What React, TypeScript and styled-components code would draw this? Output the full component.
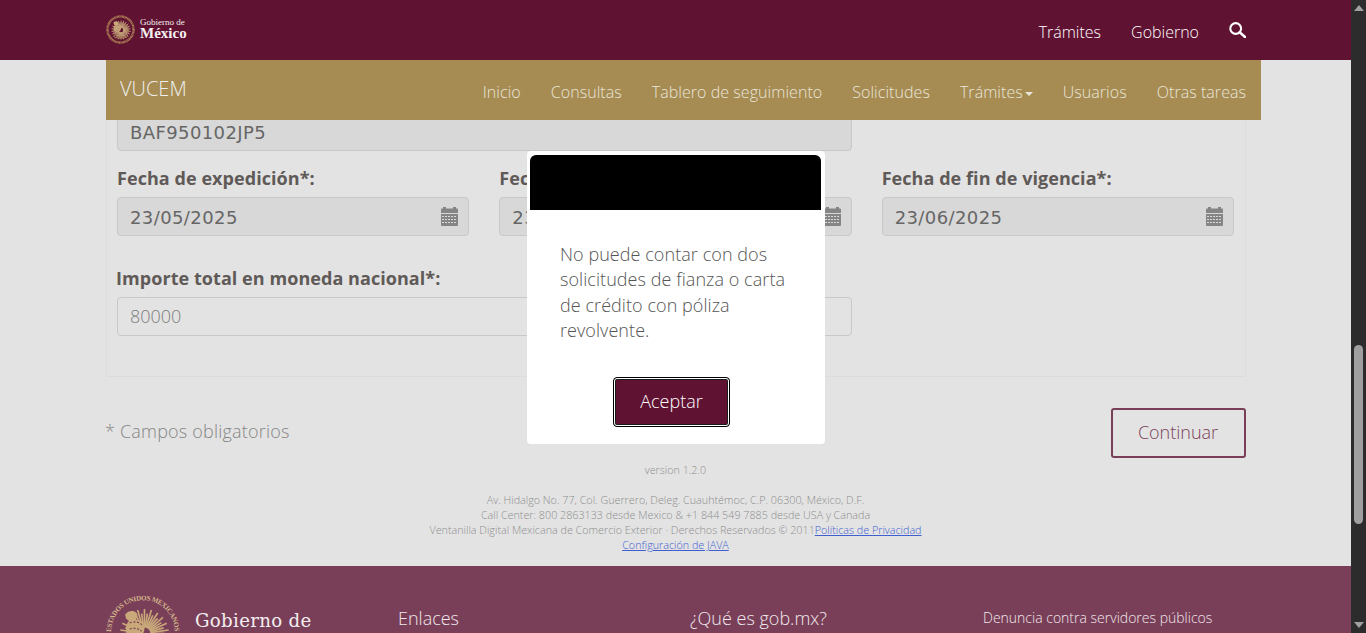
import styled, { createGlobalStyle } from 'styled-components';

const GlobalStyle = createGlobalStyle`
  html, body {
    margin: 0;
    height: 100%;
    overflow: hidden;
    background: #e3e3e3;
    font-family: "Open Sans", "Noto Sans", sans-serif;
  }
  * {
    box-sizing: border-box;
  }
`;

const MAROON = '#5f1232';
const FOOTER = '#7a3f58';

const Screen = styled.div`
  display: flex;
  width: 1366px;
  height: 633px;
  overflow: hidden;
`;

const Page = styled.div`
  position: relative;
  display: flex;
  flex-direction: column;
  width: 1351px;
  height: 633px;
  overflow: hidden;
`;

/* top bar */
const TopBar = styled.header`
  display: flex;
  flex-shrink: 0;
  align-items: center;
  justify-content: space-between;
  height: 60px;
  padding: 0 105px 0 106px;
  background: ${MAROON};
`;

const Brand = styled.div`
  display: flex;
  align-items: center;
  gap: 5px;
  margin-top: -1px;
`;

const BrandText = styled.div`
  display: flex;
  flex-direction: column;
  margin-top: -2px;
  color: #f4f0f0;
  font-family: "Liberation Serif", serif;
`;

const BrandSmall = styled.span`
  font-size: 9px;
  line-height: 9px;
`;

const BrandBig = styled.span`
  font-size: 15px;
  line-height: 13px;
  font-weight: 700;
`;

const TopLinks = styled.nav`
  display: flex;
  align-items: center;
  gap: 30px;
  margin-top: 3px;
  color: #fff;
  font-size: 16px;
  font-weight: 320;
`;

const SearchGlyph = styled.svg`
  width: 17px;
  height: 16px;
  margin-top: -4px;
`;

const SearchIcon = () => (
  <SearchGlyph viewBox="0 0 17 16">
    <circle cx="6.7" cy="6.5" r="5.4" fill="none" stroke="#fff" strokeWidth="2.1" />
    <path d="M10.8 10.4 16 15" stroke="#fff" strokeWidth="2.6" strokeLinecap="round" />
  </SearchGlyph>
);

/* gold nav */
const GoldNav = styled.nav`
  display: flex;
  flex-shrink: 0;
  position: relative;
  z-index: 1;
  justify-content: space-between;
  width: 1155px;
  height: 60px;
  margin-left: 106px;
  padding: 0 15px 0 14px;
  background: #a68c53;
  color: #e9e5da;
`;

const SiteName = styled.span`
  font-size: 20px;
  font-weight: 300;
  line-height: 58px;
  color: #eeeeee;
`;

const NavItems = styled.div`
  display: flex;
  gap: 30px;
  font-size: 16px;
  line-height: 64px;
  font-weight: 320;
  letter-spacing: 0.05px;
`;

const Caret = styled.i`
  display: inline-block;
  margin-left: 2px;
  vertical-align: middle;
  border-top: 4px solid #e9e5da;
  border-left: 4px solid transparent;
  border-right: 4px solid transparent;
`;

/* form */
const Panel = styled.section`
  flex-shrink: 0;
  display: grid;
  grid-template-columns: repeat(3, 1fr);
  column-gap: 30px;
  align-content: start;
  width: 1140px;
  height: 257px;
  margin-left: 106px;
  padding: 0 11px 0 10px;
  border: 1px solid #dcdcdc;
  border-top: 0;
  overflow: hidden;
`;

const Field = styled.div<{ $span?: number; $top: number }>`
  grid-column: span ${p => p.$span ?? 1};
  margin-top: ${p => p.$top}px;
`;

const Label = styled.label<{ $shift?: boolean }>`
  display: block;
  height: 25px;
  margin-left: ${p => (p.$shift ? -1 : 0)}px;
  margin-bottom: 6px;
  color: #5f5a58;
  font-size: 18px;
  font-weight: 700;
  letter-spacing: 0.06px;
  line-height: 25px;
  white-space: nowrap;
`;

const InputBox = styled.div<{ $enabled?: boolean }>`
  display: flex;
  align-items: center;
  justify-content: space-between;
  height: 39px;
  padding: ${p => (p.$enabled ? '0 10px 2px 12px' : '1px 10px 0 12px')};
  border: 1px solid #c8c8c8;
  border-radius: 4px;
  background: ${p => (p.$enabled ? '#e3e3e3' : '#d8d8d8')};
  color: ${p => (p.$enabled ? '#7d7d7d' : '#666')};
  font-family: ${p => (p.$enabled ? '"Open Sans", sans-serif' : '"DejaVu Sans", sans-serif')};
  font-size: 18px;
  font-weight: ${p => (p.$enabled ? 300 : 400)};
  letter-spacing: ${p => (p.$enabled ? '0' : '0.4px')};
`;

const Actions = styled.div`
  display: flex;
  flex-shrink: 0;
  align-items: flex-start;
  justify-content: space-between;
  width: 1140px;
  height: 82px;
  margin-left: 106px;
  padding-top: 31px;
`;

const Required = styled.span`
  margin: 11px 0 0 -1px;
  color: #858585;
  font-size: 18px;
  font-weight: 300;
  letter-spacing: 0.2px;
  line-height: 25px;
`;

const OutlineButton = styled.button`
  width: 135px;
  height: 50px;
  padding: 0 1px 2px 0;
  border: 2px solid ${FOOTER};
  border-radius: 3px;
  background: transparent;
  color: ${FOOTER};
  font-family: inherit;
  font-size: 18px;
  font-weight: 300;
`;

/* legal text */
const Legal = styled.div`
  flex-shrink: 0;
  height: 107px;
  color: #8e8e8e;
  font-size: 10.75px;
  font-weight: 300;
  line-height: 15px;
  text-align: center;
`;

const Version = styled.div`
  margin-top: 4px;
  margin-bottom: 15px;
`;

const LegalLink = styled.a`
  color: #3f5fd0;
  text-decoration: underline;
`;

/* footer */
const Footer = styled.footer`
  display: grid;
  flex-shrink: 0;
  grid-template-columns: 292px 292px 293px 1fr;
  height: 67px;
  padding: 29px 0 0 106px;
  overflow: hidden;
  background: ${FOOTER};
  color: #f0e8ec;
`;

const FooterBrand = styled.div`
  display: flex;
  align-items: flex-start;
  gap: 15px;
`;

const FooterBrandText = styled.div`
  display: flex;
  flex-direction: column;
  padding-top: 14px;
  font-family: "DejaVu Serif", serif;
  color: #f2eef0;
`;

const FooterSmall = styled.span`
  font-size: 18.2px;
  line-height: 24px;
  font-weight: 500;
  letter-spacing: 0.3px;
`;

const FooterBig = styled.span`
  font-size: 30px;
  line-height: 32px;
  font-weight: 700;
`;

const FooterHeading = styled.h4<{ $small?: boolean }>`
  margin: 10px 0 0;
  font-size: ${p => (p.$small ? 14 : 18)}px;
  font-weight: ${p => (p.$small ? 320 : 300)};
  line-height: 26px;
`;

/* modal */
const Overlay = styled.div`
  position: absolute;
  inset: 0;
  z-index: 5;
  display: flex;
  justify-content: center;
  align-items: flex-start;
  padding: 151px 0 0 1px;
`;

const Modal = styled.div`
  width: 298px;
  height: 293px;
  padding: 4px 4px 0 3px;
  border-radius: 4px;
  background: #fff;
`;

const ModalHead = styled.div`
  height: 55px;
  border-radius: 6px 6px 0 0;
  background: #000;
`;

const ModalBody = styled.div`
  padding: 31.5px 30px 0;
`;

const ModalText = styled.p`
  margin: 0;
  color: #555;
  font-size: 18px;
  font-weight: 320;
  letter-spacing: 0.06px;
  line-height: 25.6px;
`;

const PrimaryButton = styled.button`
  display: block;
  width: 117px;
  height: 50px;
  margin: 33px 0 0 53px;
  padding: 0 0 2px;
  border: 1px solid #000;
  border-radius: 4px;
  outline: 1px solid #fff;
  outline-offset: -2px;
  background: ${MAROON};
  box-shadow: inset 0 0 0 2px #1a1a1a;
  color: #fff;
  font-family: inherit;
  font-size: 18px;
  font-weight: 320;
`;

/* fake scrollbar */
const ScrollBar = styled.aside`
  display: flex;
  flex-direction: column;
  align-items: center;
  width: 15px;
  height: 633px;
  padding-top: 5px;
  background: #2c2c2c;
`;

const ScrollArrow = styled.i<{ $down?: boolean }>`
  display: block;
  flex-shrink: 0;
  margin-top: ${p => (p.$down ? 'auto' : '0')};
  margin-bottom: ${p => (p.$down ? '5px' : '0')};
  border-left: 5px solid transparent;
  border-right: 5px solid transparent;
  border-top: ${p => (p.$down ? '6px solid #a0a0a0' : '0')};
  border-bottom: ${p => (p.$down ? '0' : '6px solid #a0a0a0')};
`;

const ScrollThumb = styled.div`
  flex-shrink: 0;
  width: 9px;
  height: 179px;
  margin-top: 334px;
  border-radius: 5px;
  background: #9f9f9f;
`;

const CalendarGlyph = styled.svg`
  flex-shrink: 0;
  width: 17px;
  height: 19px;
  margin-top: -2px;
`;

const CalendarIcon = () => (
  <CalendarGlyph viewBox="0 0 17 19">
    <path
      fill="#858585"
      d="M2 0h3v1.5h7V0h3v1.5h1a1 1 0 0 1 1 1V6H0V2.5a1 1 0 0 1 1-1h1zM0 7h17v11a1 1 0 0 1-1 1H1a1 1 0 0 1-1-1z"
    />
    <path
      stroke="#d8d8d8"
      strokeWidth="1"
      strokeDasharray="2 1"
      fill="none"
      d="M1 9.5h15M1 12.5h15M1 15.5h15"
    />
  </CalendarGlyph>
);

const EmblemSvg = styled.svg<{ $size: number }>`
  flex-shrink: 0;
  width: ${p => p.$size}px;
  height: ${p => p.$size}px;
`;

// wing and tail feathers of the eagle, fanned out around its body
const feathers = Array.from({ length: 44 }, (_, i) => {
  const angle = (Math.PI * 2 * i) / 44;
  const outer = i % 2 ? 33 : 27;
  return {
    x1: 52 + Math.cos(angle) * 8,
    y1: 52 + Math.sin(angle) * 8,
    x2: 52 + Math.cos(angle) * outer,
    y2: 52 + Math.sin(angle) * outer,
  };
});

const Emblem = ({ size, lettered }: { size: number; lettered?: boolean }) => (
  <EmblemSvg $size={size} viewBox="0 0 100 100">
    <defs>
      <path id="emblem-ring" d="M 7 50 A 43 43 0 1 1 93 50" />
    </defs>
    {lettered ? (
      <text fill="#d3b78c" fontSize="9.5" fontFamily='"Liberation Serif", serif' fontWeight="700">
        <textPath href="#emblem-ring" textLength="134">
          ESTADOS UNIDOS MEXICANOS
        </textPath>
      </text>
    ) : (
      <circle cx="50" cy="50" r="45" fill="none" stroke="#b58a58" strokeWidth="8" strokeDasharray="3 1.5" />
    )}
    <g stroke="#c9a97a" strokeWidth={lettered ? 2.2 : 3}>
      {feathers.map((f, i) => (
        <line key={i} x1={f.x1} y1={f.y1} x2={f.x2} y2={f.y2} />
      ))}
    </g>
    <path
      fill="#c9a97a"
      d="M26 26c4-5 11-6 15-2 3 3 1 7-2 10 6-1 12 3 13 9 1 8-5 15-13 15-7 0-12-5-12-12 0-5 2-9 5-12-3 0-6-3-6-8z"
    />
    <path
      fill="none"
      stroke={FOOTER}
      strokeWidth="1.5"
      strokeDasharray="3 2"
      d="M32 38c6-3 14-2 18 4M32 46c6-2 12-1 16 3M34 54c4-1 8-1 11 1"
    />
    <path fill="none" stroke="#a08a55" strokeWidth="3" d="M24 72c10 11 42 11 52 0" />
  </EmblemSvg>
);

const navItems = ['Inicio', 'Consultas', 'Tablero de seguimiento', 'Solicitudes'];

export default function App() {
  return (
    <Screen>
      <GlobalStyle />
      <Page>
        <TopBar>
          <Brand>
            <Emblem size={29} />
            <BrandText>
              <BrandSmall>Gobierno de</BrandSmall>
              <BrandBig>México</BrandBig>
            </BrandText>
          </Brand>
          <TopLinks>
            <span>Trámites</span>
            <span>Gobierno</span>
            <SearchIcon />
          </TopLinks>
        </TopBar>

        <GoldNav>
          <SiteName>VUCEM</SiteName>
          <NavItems>
            {navItems.map(item => (
              <span key={item}>{item}</span>
            ))}
            <span>
              Trámites
              <Caret />
            </span>
            <span>Usuarios</span>
            <span>Otras tareas</span>
          </NavItems>
        </GoldNav>

        <Panel>
          <Field $span={2} $top={-8}>
            <InputBox>BAF950102JP5</InputBox>
          </Field>
          <Field $top={0} />

          <Field $top={15}>
            <Label>Fecha de expedición*:</Label>
            <InputBox>
              23/05/2025
              <CalendarIcon />
            </InputBox>
          </Field>
          <Field $top={15}>
            <Label>Fecha de inicio de vigencia*:</Label>
            <InputBox>
              23/05/2025
              <CalendarIcon />
            </InputBox>
          </Field>
          <Field $top={15}>
            <Label>Fecha de fin de vigencia*:</Label>
            <InputBox>
              23/06/2025
              <CalendarIcon />
            </InputBox>
          </Field>

          <Field $span={2} $top={30}>
            <Label $shift>Importe total en moneda nacional*:</Label>
            <InputBox $enabled>80000</InputBox>
          </Field>
        </Panel>

        <Actions>
          <Required>* Campos obligatorios</Required>
          <OutlineButton>Continuar</OutlineButton>
        </Actions>

        <Legal>
          <Version>version 1.2.0</Version>
          <div>Av. Hidalgo No. 77, Col. Guerrero, Deleg. Cuauhtémoc, C.P. 06300, México, D.F.</div>
          <div>Call Center: 800 2863133 desde Mexico &amp; +1 844 549 7885 desde USA y Canada</div>
          <div>
            Ventanilla Digital Mexicana de Comercio Exterior · Derechos Reservados © 2011
            <LegalLink href="#">Políticas de Privacidad</LegalLink>
          </div>
          <div>
            <LegalLink href="#">Configuración de JAVA</LegalLink>
          </div>
        </Legal>

        <Footer>
          <FooterBrand>
            <Emblem size={74} lettered />
            <FooterBrandText>
              <FooterSmall>Gobierno de</FooterSmall>
              <FooterBig>México</FooterBig>
            </FooterBrandText>
          </FooterBrand>
          <FooterHeading>Enlaces</FooterHeading>
          <FooterHeading>¿Qué es gob.mx?</FooterHeading>
          <FooterHeading $small>Denuncia contra servidores públicos</FooterHeading>
        </Footer>

        <Overlay>
          <Modal>
            <ModalHead />
            <ModalBody>
              <ModalText>No puede contar con dos solicitudes de fianza o carta de crédito con póliza revolvente.</ModalText>
              <PrimaryButton>Aceptar</PrimaryButton>
            </ModalBody>
          </Modal>
        </Overlay>
      </Page>

      <ScrollBar>
        <ScrollArrow />
        <ScrollThumb />
        <ScrollArrow $down />
      </ScrollBar>
    </Screen>
  );
}
